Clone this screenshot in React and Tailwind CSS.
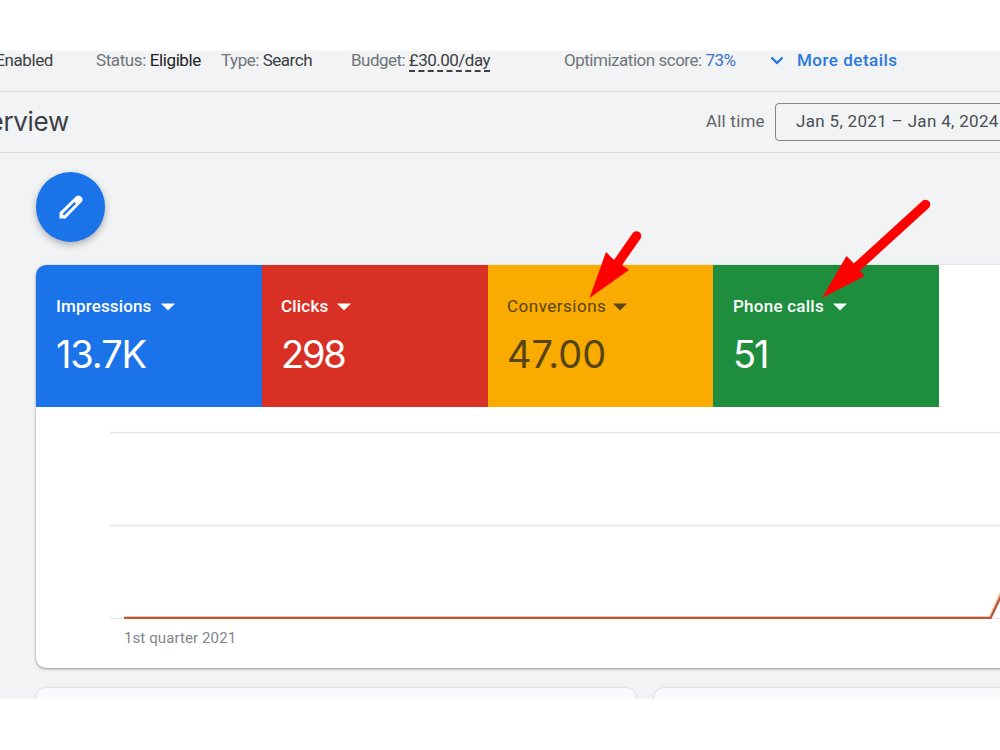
const metrics = [
  { label: 'Impressions', value: '13.7K', box: 'w-[226px] pl-[20px] bg-[#1a73e8] text-white', labelStyle: 'w-[97px] font-medium tracking-[0.15px]', tracking: 'tracking-[-1.1px]' },
  { label: 'Clicks', value: '298', box: 'w-[226px] pl-[19px] bg-[#d93025] text-white', labelStyle: 'w-[48px] font-medium tracking-[0.2px]', tracking: 'tracking-[-2.2px]' },
  { label: 'Conversions', value: '47.00', box: 'w-[225px] pl-[19px] bg-[#f9ab00] text-[#574414]', labelStyle: 'w-[98px] font-normal tracking-[0.5px]', tracking: 'tracking-[0px]' },
  { label: 'Phone calls', value: '51', box: 'w-[226px] pl-[20px] bg-[#1e8e3e] text-white', labelStyle: 'w-[92px] font-medium tracking-[0.25px]', tracking: 'tracking-[-2px]' },
];

function StatusBar() {
  return (
    <div className="flex h-[41px] shrink-0 border-b border-[#dadce0] text-[17px] leading-[19px] tracking-[-0.4px] text-[#70757a]">
      <div className="flex w-[53px] shrink-0 justify-end text-[#3c4043]">Enabled</div>
      <div className="ml-[43px] w-[125px] shrink-0">Status: <span className="text-[#202124]">Eligible</span></div>
      <div className="w-[130px] shrink-0 tracking-[-0.47px]">Type: <span className="text-[#3c4043]">Search</span></div>
      <div className="w-[213px] shrink-0 tracking-[-0.52px]">
        Budget: <span className="inline-block h-[21px] border-b-2 border-dashed border-[#3c4043] text-[#3c4043]">£30.00/day</span>
      </div>
      <div className="w-[206px] shrink-0 tracking-[-0.48px]">Optimization score: <span className="text-[#4272c8]">73%</span></div>
      <svg className="mt-[5px] h-[9px] w-[14px] shrink-0" viewBox="0 0 14 9" fill="none" stroke="#1a73e8" strokeWidth="2.2">
        <path d="M1.5 1.5 7 7l5.500-5.500" />
      </svg>
      <div className="ml-[13px] font-medium tracking-[0.5px] text-[#2b78df]">More details</div>
    </div>
  );
}

function TitleBar() {
  return (
    <div className="flex h-[61px] shrink-0 items-center border-b border-[#dadce0]">
      <div className="-mt-[2px] flex w-[69px] shrink-0 justify-end font-['Inter',sans-serif] text-[26px] tracking-[-0.3px] text-[#3c4043]">Overview</div>
      <div className="ml-[637px] w-[69px] shrink-0 text-[17px] tracking-[0.2px] text-[#5f6368]">All time</div>
      <div className="flex h-[38px] w-[270px] shrink-0 items-center whitespace-nowrap rounded-[4px] border-[1.5px] border-[#80868b] pl-[20px] text-[17px] tracking-[0.32px] text-[#4b4f54]">
        Jan 5, 2021 – Jan 4, 2024
      </div>
    </div>
  );
}

function Metric({ label, value, box, labelStyle, tracking }) {
  return (
    <div className={`flex h-[142px] shrink-0 flex-col ${box}`}>
      <div className="mt-[31px] flex h-[22px] items-center whitespace-nowrap text-[17px]">
        <span className={`shrink-0 ${labelStyle}`}>{label}</span>
        <svg className="ml-[8px] h-[8px] w-[14px]" viewBox="0 0 14 8" fill="currentColor"><path d="M0 .5h14L7 7.500z" /></svg>
      </div>
      <div className={`mt-[13px] h-[46px] font-['Inter',sans-serif] text-[38px] leading-[46px] ${tracking}`}>{value}</div>
    </div>
  );
}

function Chart() {
  return (
    <svg className="block h-[212px] w-[964px]" viewBox="36 407 964 212" fill="none">
      <path d="M110 432.500H1000M110 525.500H1000M110 618.500H1000" stroke="#e4e5e7" strokeWidth="1.500" />
      <path d="M124 617.200H990L1002 590" stroke="#f5c9a0" strokeWidth="2.500" />
      <path d="M124 618.200H990.500L1003 592" stroke="#b95641" strokeWidth="2.300" />
    </svg>
  );
}

export default function App() {
  return (
    <div className="h-[750px] w-[1000px] overflow-hidden bg-white py-[51px] font-['Roboto',sans-serif]">
      <main className="relative flex h-[648px] flex-col overflow-hidden bg-[#f1f3f4]">
        <StatusBar />
        <TitleBar />
        <div className="flex h-[112px] shrink-0 pl-[36px] pt-[19px]">
          <button className="flex h-[70px] w-[69px] items-center justify-center rounded-full bg-[#1a73e8] shadow-[0_3px_7px_rgba(60,64,67,0.38)]">
            <svg className="h-[26px] w-[26px]" viewBox="0 0 26 26" fill="none">
              <path d="M1.500 24.500v-6L18.200 2.200q2.300-1.700 4.500.3l.8.800q2 2.200.3 4.500L7.500 24.500z" fill="white" />
              <path d="M5.300 20.700 17.200 8.900" stroke="#1a73e8" strokeWidth="2.300" />
            </svg>
          </button>
        </div>
        <section className="ml-[36px] h-[403px] w-[990px] shrink-0 rounded-[10px] bg-white shadow-[0_1px_3px_rgba(60,64,67,0.55)]">
          <div className="flex overflow-hidden rounded-tl-[10px]">
            {metrics.map((m) => <Metric key={m.label} {...m} />)}
          </div>
          <Chart />
          <div className="ml-[88px] mt-[9px] text-[15px] leading-[20px] tracking-[0.1px] text-[#80868b]">1st quarter 2021</div>
        </section>
        <div className="ml-[36px] mt-[20px] flex shrink-0 gap-[18px]">
          <div className="h-[40px] w-[600px] shrink-0 rounded-[10px] bg-[#f9fafb] shadow-[0_0_2px_rgba(60,64,67,0.3)]" />
          <div className="h-[40px] w-[400px] shrink-0 rounded-[10px] bg-[#f9fafb] shadow-[0_0_2px_rgba(60,64,67,0.3)]" />
        </div>
        <svg className="pointer-events-none absolute left-[580px] top-[140px] h-[120px] w-[360px]" viewBox="580 191 360 120" fill="#ff0000">
          <path d="M636.500 236 617 264M925.500 204.500 857 267" stroke="#ff0000" strokeWidth="9.500" strokeLinecap="round" />
          <path d="M589.500 298 606 252l7 7 9 6 7 5z" />
          <path d="M822 298 846.500 256l7 7 11 13z" />
        </svg>
      </main>
    </div>
  );
}
